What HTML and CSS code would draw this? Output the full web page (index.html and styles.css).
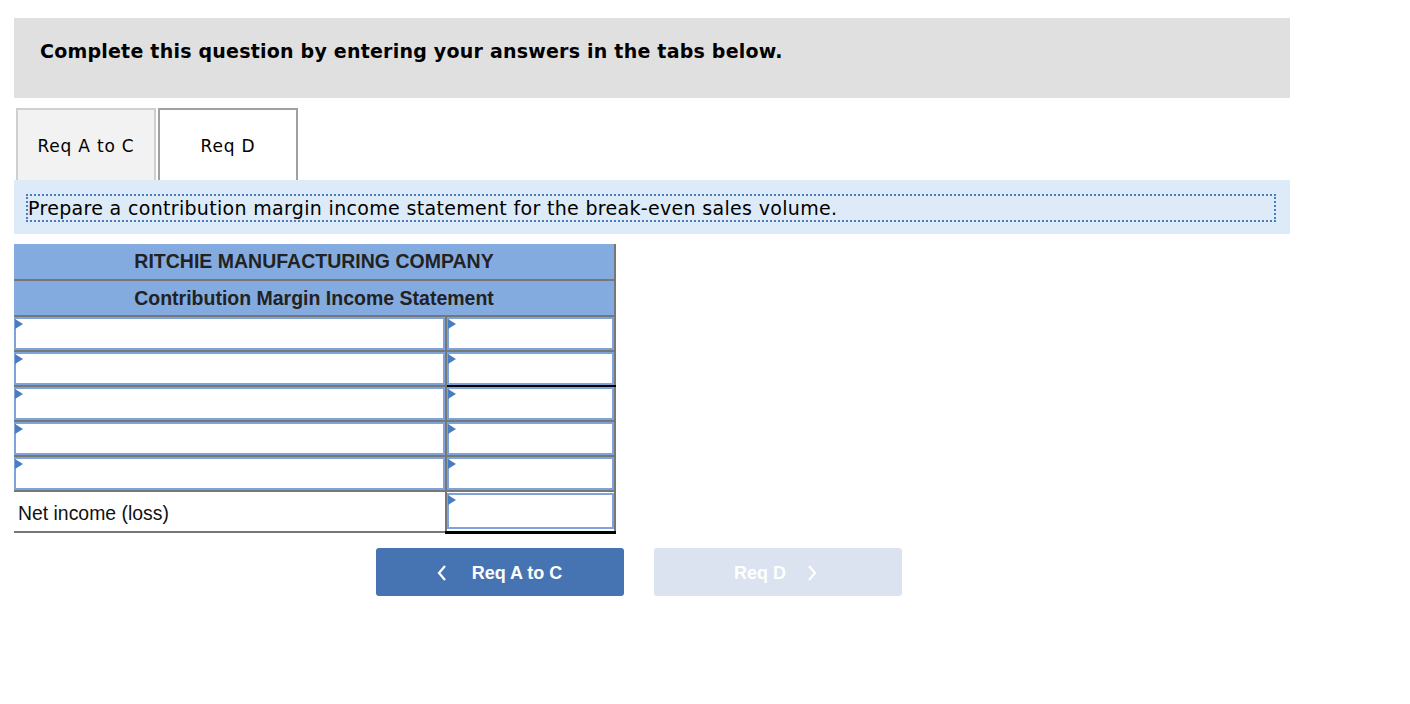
FILE: index.html
```html
<!DOCTYPE html>
<html lang="en">
<head>
    <meta charset="UTF-8">
    <title>Req D</title>
    <link rel="stylesheet" href="styles.css">
</head>
<body>
    <div class="question-header">
        <h1>Complete this question by entering your answers in the tabs below.</h1>
    </div>

    <div class="tabs">
        <div class="tab">Req A to C</div>
        <div class="tab tab-active">Req D</div>
    </div>

    <div class="instruction">
        <p class="instruction-text">Prepare a contribution margin income statement for the break-even sales volume.</p>
    </div>

    <table class="statement">
        <thead>
            <tr><th colspan="2">RITCHIE MANUFACTURING COMPANY</th></tr>
            <tr><th colspan="2">Contribution Margin Income Statement</th></tr>
        </thead>
        <tbody>
            <tr>
                <td class="label-cell"><div class="field"><input type="text"></div></td>
                <td class="amount-cell"><div class="field"><input type="text"></div></td>
            </tr>
            <tr>
                <td class="label-cell"><div class="field"><input type="text"></div></td>
                <td class="amount-cell underline"><div class="field"><input type="text"></div></td>
            </tr>
            <tr>
                <td class="label-cell"><div class="field"><input type="text"></div></td>
                <td class="amount-cell"><div class="field"><input type="text"></div></td>
            </tr>
            <tr>
                <td class="label-cell"><div class="field"><input type="text"></div></td>
                <td class="amount-cell"><div class="field"><input type="text"></div></td>
            </tr>
            <tr>
                <td class="label-cell"><div class="field"><input type="text"></div></td>
                <td class="amount-cell"><div class="field"><input type="text"></div></td>
            </tr>
            <tr class="total-row">
                <td class="label-cell total-label">Net income (loss)</td>
                <td class="amount-cell double-underline"><div class="field"><input type="text"></div></td>
            </tr>
        </tbody>
    </table>

    <div class="nav-buttons">
        <a href="#" class="nav-button nav-prev">
            <svg class="chevron" width="12" height="18" viewBox="0 0 12 18"><path d="M9 2 L3 9 L9 16" fill="none" stroke="currentColor" stroke-width="2.2"/></svg>
            <span>Req A to C</span>
        </a>
        <a href="#" class="nav-button nav-next">
            <span>Req D</span>
            <svg class="chevron" width="12" height="18" viewBox="0 0 12 18"><path d="M3 2 L9 9 L3 16" fill="none" stroke="currentColor" stroke-width="2.2"/></svg>
        </a>
    </div>
</body>
</html>
```

FILE: styles.css
```css
* {
    margin: 0;
    padding: 0;
    box-sizing: border-box;
}

body {
    font-family: "DejaVu Sans", Verdana, sans-serif;
    color: #000;
    background: white;
    padding: 18px 0 0 14px;
}

.question-header {
    width: 1276px;
    height: 80px;
    background: #e0e0e0;
    padding: 22px 0 0 26px;
}

.question-header h1 {
    font-size: 19px;
    font-weight: bold;
    letter-spacing: 0.22px;
}

.tabs {
    display: flex;
    gap: 2px;
    padding: 10px 0 0 2px;
}

.tab {
    width: 140px;
    height: 72px;
    border: 2px solid #cfcfcf;
    border-bottom: none;
    background: #f2f2f2;
    font-size: 17px;
    letter-spacing: 0.8px;
    display: flex;
    justify-content: center;
    align-items: center;
    padding-top: 1px;
}

.tab-active {
    background: white;
    border-color: #a0a0a0;
}

.instruction {
    width: 1276px;
    height: 54px;
    background: #ddebf8;
    padding: 14px 14px 0 12px;
}

.instruction-text {
    border: 2px dotted #4a7cc1;
    height: 28px;
    font-size: 19px;
    line-height: 25px;
    padding-left: 0;
    letter-spacing: 0.32px;
}

.statement {
    margin-top: 10px;
    border-collapse: collapse;
    width: 602px;
    font-family: "Liberation Sans", Arial, sans-serif;
}

.statement th {
    background: #84abe0;
    color: #222;
    font-size: 19.5px;
    font-weight: bold;
    height: 36px;
    border-bottom: 2px solid #777;
    border-right: 2px solid #777;
    padding-top: 0;
}

.statement td {
    height: 35px;
    padding: 0;
    border-bottom: 2px solid #777;
}

.label-cell {
    width: 432px;
    border-right: 2px solid #777;
}

.amount-cell {
    border-right: 2px solid #777;
}

.field {
    position: relative;
    height: 33px;
}

.field::before {
    content: "";
    position: absolute;
    left: 1px;
    top: 2px;
    border-left: 8px solid #4a7cc1;
    border-top: 5px solid transparent;
    border-bottom: 5px solid transparent;
}

.field input {
    width: 100%;
    height: 100%;
    border: 2px solid #7ea3d9;
    background: white;
    outline: none;
    font-size: 16px;
}

.statement .underline {
    border-bottom: 2px solid #000;
}

.statement .total-row td {
    height: 41px;
}

.statement .total-label {
    font-size: 19.4px;
    color: #111;
    padding: 4px 0 0 4px;
}

.statement .double-underline {
    border-bottom: 3px solid #000;
}

.total-row .field {
    height: 36px;
}

.nav-buttons {
    display: flex;
    gap: 30px;
    margin: 14px 0 0 362px;
}

.nav-button {
    width: 248px;
    height: 48px;
    border-radius: 3px;
    display: flex;
    justify-content: center;
    align-items: center;
    gap: 24px;
    color: white;
    font-family: "Liberation Sans", Arial, sans-serif;
    font-weight: bold;
    font-size: 18px;
    text-decoration: none;
    letter-spacing: 0;
    padding-top: 3px;
}

.nav-prev {
    background: #4674b3;
    padding-right: 2px;
}

.nav-next {
    background: #dae3ef;
    gap: 20px;
    padding-right: 4px;
}
```
